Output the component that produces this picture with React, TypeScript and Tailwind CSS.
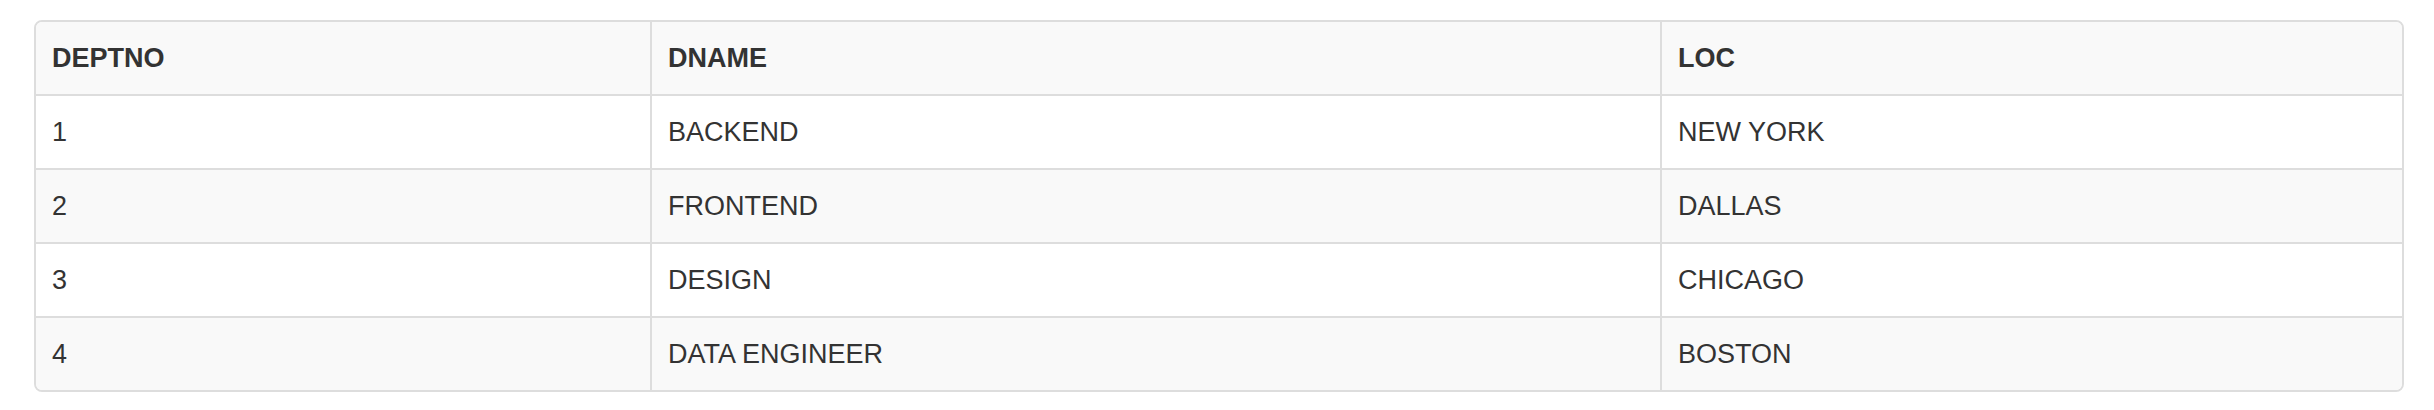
import React from "react";

const rows = [
  { deptno: "1", dname: "BACKEND", loc: "NEW YORK" },
  { deptno: "2", dname: "FRONTEND", loc: "DALLAS" },
  { deptno: "3", dname: "DESIGN", loc: "CHICAGO" },
  { deptno: "4", dname: "DATA ENGINEER", loc: "BOSTON" },
];

export default function App() {
  return (
    <div className="w-[2434px] h-[410px] bg-white pt-[20px] pl-[34px] font-['Liberation_Sans',Arial,sans-serif] text-[27px] text-[#333]">
      <div className="w-[2370px] border-2 border-[#dddddd] rounded-[8px] overflow-hidden">
        <table className="w-full table-fixed border-separate border-spacing-0">
          <colgroup>
            <col className="w-[614px]" />
            <col className="w-[1010px]" />
            <col />
          </colgroup>
          <thead>
            <tr className="bg-[#f9f9f9]">
              <th className="h-[72px] px-4 text-left font-bold">DEPTNO</th>
              <th className="h-[72px] px-4 text-left font-bold border-l-2 border-[#dddddd]">DNAME</th>
              <th className="h-[72px] px-4 text-left font-bold border-l-2 border-[#dddddd]">LOC</th>
            </tr>
          </thead>
          <tbody>
            {rows.map((r, i) => (
              <tr key={r.deptno} className={i % 2 === 1 ? "bg-[#f9f9f9]" : "bg-white"}>
                <td className="h-[74px] px-4 border-t-2 border-[#dddddd]">{r.deptno}</td>
                <td className="h-[74px] px-4 border-t-2 border-l-2 border-[#dddddd]">{r.dname}</td>
                <td className="h-[74px] px-4 border-t-2 border-l-2 border-[#dddddd]">{r.loc}</td>
              </tr>
            ))}
          </tbody>
        </table>
      </div>
    </div>
  );
}
